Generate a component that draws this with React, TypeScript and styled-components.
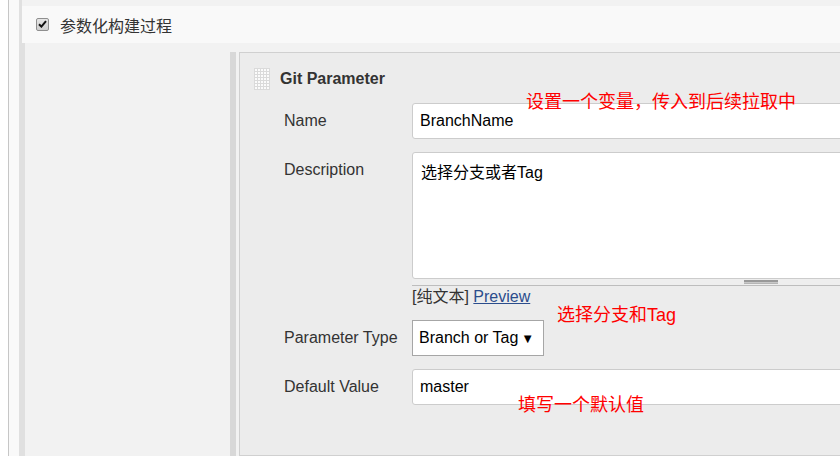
import React from "react";
import styled, { createGlobalStyle } from "styled-components";

const GlobalStyle = createGlobalStyle`
  html, body {
    margin: 0;
    padding: 0;
    background: #ffffff;
  }
  body {
    font-family: "Liberation Sans", Arial, "Noto Sans CJK SC", sans-serif;
    color: #333333;
  }
`;

const Page = styled.div`
  position: relative;
  width: 840px;
  height: 456px;
  overflow: hidden;
  padding-left: 8px;
  box-sizing: border-box;
  background: #ffffff;
`;

const Outer = styled.div`
  height: 100%;
  border-left: 1px solid #c6c6c6;
  padding-left: 10px;
  background: #f9f9f9;
`;

const Block = styled.div`
  height: 100%;
  display: flex;
  flex-direction: column;
  border-left: 3px solid #e0e0e0;
`;

const TopBand = styled.div`
  height: 6px;
  background: #f2f2f2;
`;

const HeaderRow = styled.div`
  height: 37px;
  display: flex;
  align-items: center;
  gap: 11px;
  padding-left: 14px;
  background: #f9f9f9;
  font-family: "Liberation Sans", "Noto Sans CJK SC", sans-serif;
  font-size: 16px;
  color: #333;
`;

const CheckBox = styled.span`
  width: 13px;
  height: 13px;
  box-sizing: border-box;
  border: 1px solid #8f8f8f;
  border-radius: 2px;
  background: linear-gradient(#e6e6e6, #cfcfcf);
  display: flex;
  align-items: center;
  justify-content: center;
  margin-top: -1px;
`;

const Body = styled.div`
  flex: 1;
  border-left: 3px solid #e0e0e0;
  background: #f2f2f2;
  padding: 9px 0 0 205px;
  display: flex;
`;

const Item = styled.div`
  border-left: 6px solid #d8d8d8;
  padding-left: 3px;
  display: flex;
`;

const Panel = styled.div`
  width: 900px;
  border: 1px solid #d0d0d0;
  background: #ececec;
  padding: 15px 0 0 14px;
`;

const PanelHead = styled.div`
  display: flex;
  align-items: center;
  gap: 10px;
  height: 22px;
`;

const Handle = styled.span`
  width: 16px;
  height: 22px;
  background-color: #fbfbfb;
  background-image: linear-gradient(#dadada 1px, transparent 1px),
    linear-gradient(90deg, #dadada 1px, transparent 1px);
  background-size: 3px 3px;
`;

const Title = styled.span`
  font-weight: bold;
  font-size: 16px;
  color: #333;
`;

const Form = styled.div`
  display: grid;
  grid-template-columns: 128px auto;
  row-gap: 13px;
  margin: 13px 0 0 30px;
  justify-items: start;
`;

const Label = styled.div`
  font-size: 16px;
  line-height: 36px;
  color: #333;
`;

const TextInput = styled.div`
  width: 698px;
  height: 36px;
  box-sizing: border-box;
  border: 1px solid #cccccc;
  border-radius: 3px;
  background: #fff;
  padding-left: 7px;
  font-size: 16px;
  line-height: 34px;
  color: #000;
`;

const AreaWrap = styled.div`
  display: flex;
  flex-direction: column;
`;

const TextArea = styled.div`
  width: 698px;
  height: 127px;
  box-sizing: border-box;
  border: 1px solid #cccccc;
  border-radius: 3px;
  background: #fff;
  padding: 8px 8px;
  font-family: "Liberation Sans", "Noto Sans CJK SC", sans-serif;
  font-size: 16px;
  line-height: 24px;
  color: #000;
`;

const ResizeBar = styled.div`
  width: 698px;
  height: 7px;
  box-sizing: border-box;
  background: #eeeeee;
  border-bottom: 1px solid #bdbdbd;
  display: flex;
  justify-content: center;
  padding-top: 1px;
`;

const Grip = styled.span`
  width: 34px;
  height: 4px;
  box-sizing: border-box;
  border-top: 2px solid #999;
  border-bottom: 1px solid #b5b5b5;
  background: #c8c8c8;
`;

const Help = styled.div`
  height: 21px;
  line-height: 21px;
  font-family: "Liberation Sans", "Noto Sans CJK SC", sans-serif;
  font-size: 16px;
  color: #333;
`;

const Link = styled.a`
  color: #2b4d8c;
  text-decoration: underline;
`;

const SelectBox = styled.div`
  width: 132px;
  height: 36px;
  box-sizing: border-box;
  border: 1px solid #a6a6a6;
  background: #fff;
  display: flex;
  align-items: center;
  justify-content: space-between;
  padding: 0 9px 0 6px;
  font-size: 16px;
  color: #000;
`;

const Arrow = styled.span`
  font-size: 13px;
  color: #000;
`;

const Note = styled.div<{ $x: number; $y: number }>`
  position: absolute;
  left: ${(p) => p.$x}px;
  top: ${(p) => p.$y}px;
  font-family: "Liberation Sans", "Noto Sans CJK SC", sans-serif;
  font-size: 18px;
  line-height: 18px;
  color: #ff0000;
  white-space: nowrap;
`;

export default function App() {
  return (
    <Page>
      <GlobalStyle />
      <Outer>
        <Block>
          <TopBand />
          <HeaderRow>
            <CheckBox>
              <svg width="9" height="8" viewBox="0 0 9 8">
                <path d="M1 4.2 L3.4 6.6 L8 1.2" fill="none" stroke="#111" strokeWidth="2" />
              </svg>
            </CheckBox>
            参数化构建过程
          </HeaderRow>
          <Body>
            <Item>
              <Panel>
                <PanelHead>
                  <Handle />
                  <Title>Git Parameter</Title>
                </PanelHead>
                <Form>
                  <Label>Name</Label>
                  <TextInput>BranchName</TextInput>

                  <Label>Description</Label>
                  <div>
                    <AreaWrap>
                      <TextArea>选择分支或者Tag</TextArea>
                      <ResizeBar>
                        <Grip />
                      </ResizeBar>
                    </AreaWrap>
                    <Help>
                      [纯文本] <Link href="#">Preview</Link>
                    </Help>
                  </div>

                  <Label>Parameter Type</Label>
                  <SelectBox>
                    Branch or Tag
                    <Arrow>▼</Arrow>
                  </SelectBox>

                  <Label>Default Value</Label>
                  <TextInput>master</TextInput>
                </Form>
              </Panel>
            </Item>
          </Body>
        </Block>
      </Outer>
      <Note $x={526} $y={93}>设置一个变量，传入到后续拉取中</Note>
      <Note $x={557} $y={306}>选择分支和Tag</Note>
      <Note $x={518} $y={396}>填写一个默认值</Note>
    </Page>
  );
}
